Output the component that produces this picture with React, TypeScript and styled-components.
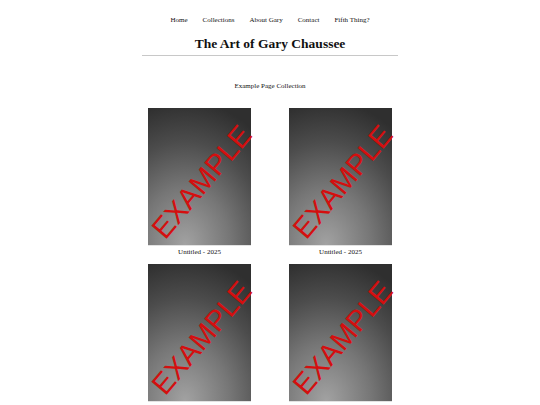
import React from "react";
import styled, { createGlobalStyle } from "styled-components";

const Global = createGlobalStyle`
  html, body { margin: 0; padding: 0; background: #fff; }
  body { font-family: "Liberation Serif", "Times New Roman", serif; color: #111; }
`;

const Page = styled.div`
  width: 540px;
  display: flex;
  flex-direction: column;
  align-items: center;
`;

const Nav = styled.nav`
  display: flex;
  gap: 15px;
  margin-top: 15px;
  font-size: 7px;
  line-height: 10px;
`;

const NavLink = styled.a`
  color: #111;
  text-decoration: none;
`;

const Header = styled.header`
  width: 256px;
  margin-top: 10px;
  border-bottom: 1px solid #c8c8c8;
  display: flex;
  justify-content: center;
`;

const Title = styled.h1`
  margin: 0 0 2px;
  font-size: 13.5px;
  line-height: 18px;
  font-weight: bold;
`;

const Subtitle = styled.div`
  margin-top: 25px;
  font-size: 7px;
  line-height: 10px;
`;

const Grid = styled.div`
  margin-top: 17px;
  display: grid;
  grid-template-columns: 103px 103px;
  column-gap: 38px;
  row-gap: 7px;
`;

const Card = styled.figure`
  margin: 0;
  display: flex;
  flex-direction: column;
  align-items: center;
`;

const Art = styled.div`
  position: relative;
  width: 103px;
  height: 137px;
  background: radial-gradient(ellipse 110% 105% at 36% 100%, #a2a2a2 0%, #767676 40%, #4c4c4c 72%, #2f2f2f 100%);
  border-bottom: 1px solid #e2e2e2;
`;

const Watermark = styled.span`
  position: absolute;
  left: 50%;
  top: 50%;
  transform: translate(-50%, -50%) rotate(-50deg);
  font-family: "Liberation Sans", Arial, sans-serif;
  font-size: 29px;
  line-height: 29px;
  color: #d40f0f;
  white-space: nowrap;
  margin-left: 2px;
  margin-top: 5px;
`;

const Caption = styled.figcaption`
  margin-top: 1px;
  font-size: 7px;
  line-height: 10px;
`;

const links = ["Home", "Collections", "About Gary", "Contact", "Fifth Thing?"];
const items = [1, 2, 3, 4];

export default function App() {
  return (
    <Page>
      <Global />
      <Nav>
        {links.map((l) => (
          <NavLink key={l} href="#">{l}</NavLink>
        ))}
      </Nav>
      <Header>
        <Title>The Art of Gary Chaussee</Title>
      </Header>
      <Subtitle>Example Page Collection</Subtitle>
      <Grid>
        {items.map((i) => (
          <Card key={i}>
            <Art>
              <Watermark>EXAMPLE</Watermark>
            </Art>
            <Caption>Untitled - 2025</Caption>
          </Card>
        ))}
      </Grid>
    </Page>
  );
}
